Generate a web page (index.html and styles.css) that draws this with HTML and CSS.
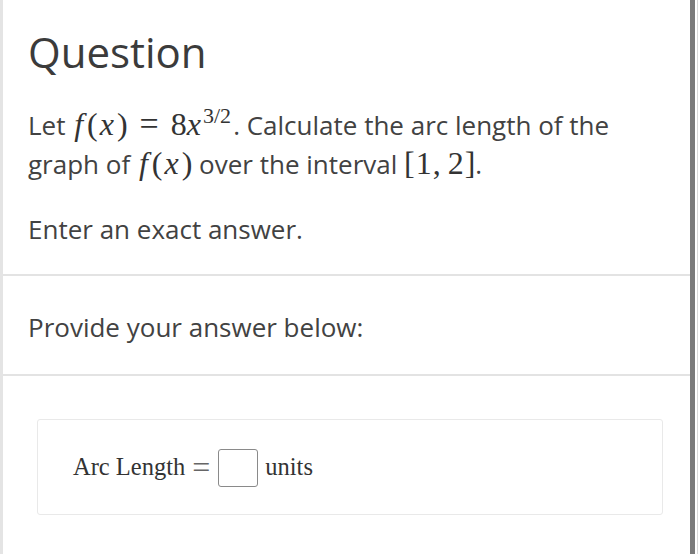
FILE: index.html
```html
<!DOCTYPE html>
<html>
<head>
<meta charset="utf-8">
<link rel="stylesheet" href="styles.css">
</head>
<body>
<div class="frame">
  <div class="edge-left"></div>
  <main class="main">
    <section class="question">
      <h1 class="title">Question</h1>
      <p class="text lead">Let <span class="math"><i class="fn">f</i>(<i class="var">x</i>)<span class="op">=</span>8<i class="base">x</i><sup>3/2</sup></span>. Calculate the arc length of the graph of <span class="math"><i class="fn">f</i>(<i class="var">x</i>)</span> over the interval <span class="math">[<span class="num">1</span>,<span class="thin"></span><span class="num">2</span>]</span>.</p>
      <p class="text hint">Enter an exact answer.</p>
    </section>
    <section class="prompt">
      <p class="text">Provide your answer below:</p>
    </section>
    <section class="answer">
      <div class="answer-box">
        <span class="label">Arc Length</span><span class="eq">=</span><span class="input"></span><span class="unit">units</span>
      </div>
    </section>
  </main>
  <div class="edge-right"></div>
  <div class="gap"></div>
  <div class="edge-line"></div>
  <div class="tail"></div>
</div>
</body>
</html>
```
FILE: styles.css
```css
html, body {
  margin: 0;
  padding: 0;
  background: #fff;
}
.frame {
  display: flex;
  height: 554px;
  width: 700px;
  overflow: hidden;
}
.edge-left {
  width: 3px;
  background: #e4e4e4;
  flex: none;
}
.main {
  flex: 1;
  display: flex;
  flex-direction: column;
  font-family: "Open Sans", sans-serif;
  color: #424242;
}
.edge-right {
  width: 5px;
  background: #7b7b7b;
  flex: none;
}
.gap { width: 2px; flex: none; }
.edge-line { width: 1px; background: #d8d8d8; flex: none; }
.tail { width: 2px; flex: none; }

.question {
  box-sizing: border-box;
  padding: 27px 25px 0;
  height: 276px;
  border-bottom: 2px solid #e3e3e3;
}
.title {
  margin: 0;
  font-weight: 400;
  font-size: 42px;
  line-height: 50px;
  color: #3b3b3b;
}
.text {
  margin: 0;
  font-size: 26px;
  line-height: 39px;
}
.lead {
  margin-top: 29px;
}
.hint {
  margin-top: 26px;
}
.math {
  font-family: "Liberation Serif", serif;
  font-size: 32px;
  line-height: 1;
  color: #333;
}
.math i { font-style: italic; }
.fn { padding: 0 4px 0 2px; }
.var { padding: 0 2px; margin-right: 1px; }
.base { padding-right: 1px; }
.op { margin: 0 12px; font-size: 34px; }
.num { padding: 0 1px; }
.thin { display: inline-block; width: 6px; }
.math sup {
  font-size: 22px;
  line-height: 0;
  vertical-align: 12px;
  padding: 0 2px 0 1px;
}
.prompt {
  box-sizing: border-box;
  height: 100px;
  padding: 32px 25px 0;
  border-bottom: 2px solid #e3e3e3;
}
.answer {
  padding: 43px 0 0 34px;
}
.answer-box {
  width: 626px;
  height: 96px;
  border: 1px solid #e9e9e9;
  border-radius: 3px;
  display: flex;
  align-items: center;
  padding-left: 35px;
  box-sizing: border-box;
  font-family: "Liberation Serif", serif;
  font-size: 24.5px;
  color: #333;
}
.eq { margin: 0 8px 0 7px; font-size: 32px; color: #666; line-height: 1; }
.input {
  width: 40px;
  height: 38px;
  box-sizing: border-box;
  border: 1px solid #8a8a8a;
  border-radius: 3px;
  margin-right: 7px;
  margin-top: 1px;
}
```
